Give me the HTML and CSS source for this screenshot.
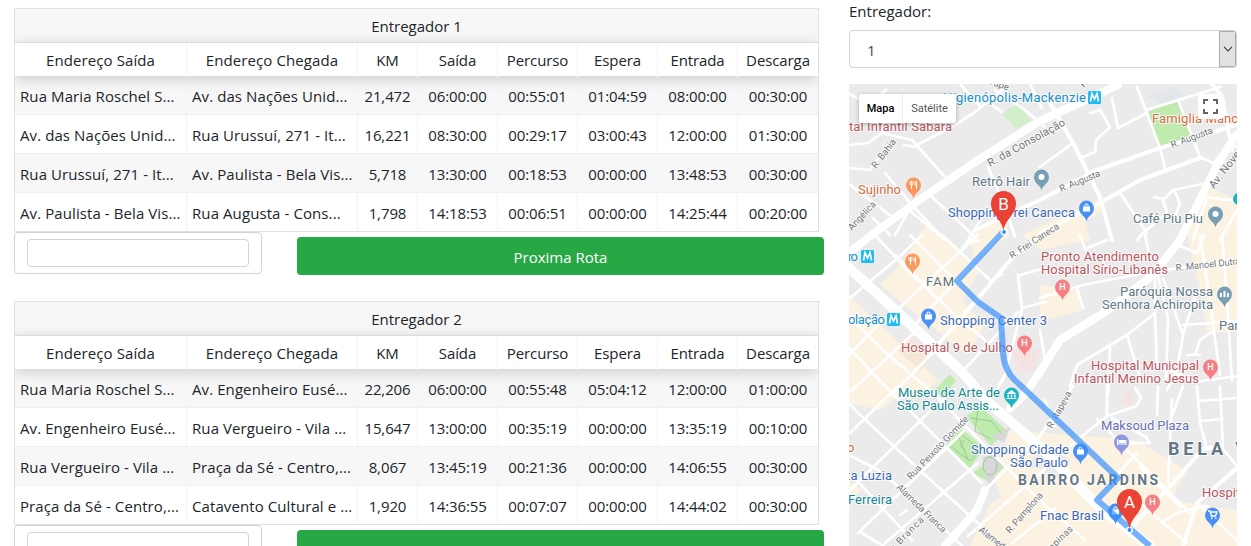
FILE: index.html
```
<!DOCTYPE html>
<html lang="pt-BR">
<head>
<meta charset="utf-8">
<title>Entregadores</title>
<link rel="stylesheet" href="styles.css">
</head>
<body>
<main class="page">
<div class="routes">
  <section class="route">
    <div class="grid">
      <div class="grid-title">Entregador 1</div>
      <div class="row head"><span>Endereço Saída</span><span>Endereço Chegada</span><span>KM</span><span>Saída</span><span>Percurso</span><span>Espera</span><span>Entrada</span><span>Descarga</span></div>
      <div class="row odd"><span class="addr">Rua Maria Roschel S...</span><span class="addr">Av. das Nações Unid...</span><span>21,472</span><span>06:00:00</span><span>00:55:01</span><span>01:04:59</span><span>08:00:00</span><span>00:30:00</span></div>
      <div class="row"><span class="addr">Av. das Nações Unid...</span><span class="addr">Rua Urussuí, 271 - It...</span><span>16,221</span><span>08:30:00</span><span>00:29:17</span><span>03:00:43</span><span>12:00:00</span><span>01:30:00</span></div>
      <div class="row odd"><span class="addr">Rua Urussuí, 271 - It...</span><span class="addr">Av. Paulista - Bela Vis...</span><span>5,718</span><span>13:30:00</span><span>00:18:53</span><span>00:00:00</span><span>13:48:53</span><span>00:30:00</span></div>
      <div class="row"><span class="addr">Av. Paulista - Bela Vis...</span><span class="addr">Rua Augusta - Cons...</span><span>1,798</span><span>14:18:53</span><span>00:06:51</span><span>00:00:00</span><span>14:25:44</span><span>00:20:00</span></div>
    </div>
    <div class="actions"><div class="field"><div class="field-inner"></div></div><button class="next">Proxima Rota</button></div>
  </section>
  <section class="route">
    <div class="grid">
      <div class="grid-title">Entregador 2</div>
      <div class="row head"><span>Endereço Saída</span><span>Endereço Chegada</span><span>KM</span><span>Saída</span><span>Percurso</span><span>Espera</span><span>Entrada</span><span>Descarga</span></div>
      <div class="row odd"><span class="addr">Rua Maria Roschel S...</span><span class="addr">Av. Engenheiro Eusé...</span><span>22,206</span><span>06:00:00</span><span>00:55:48</span><span>05:04:12</span><span>12:00:00</span><span>01:00:00</span></div>
      <div class="row"><span class="addr">Av. Engenheiro Eusé...</span><span class="addr">Rua Vergueiro - Vila ...</span><span>15,647</span><span>13:00:00</span><span>00:35:19</span><span>00:00:00</span><span>13:35:19</span><span>00:10:00</span></div>
      <div class="row odd"><span class="addr">Rua Vergueiro - Vila ...</span><span class="addr">Praça da Sé - Centro,...</span><span>8,067</span><span>13:45:19</span><span>00:21:36</span><span>00:00:00</span><span>14:06:55</span><span>00:30:00</span></div>
      <div class="row"><span class="addr">Praça da Sé - Centro,...</span><span class="addr">Catavento Cultural e ...</span><span>1,920</span><span>14:36:55</span><span>00:07:07</span><span>00:00:00</span><span>14:44:02</span><span>00:30:00</span></div>
    </div>
    <div class="actions"><div class="field"><div class="field-inner"></div></div><button class="next">Proxima Rota</button></div>
  </section>
</div>
<aside class="side">
  <div class="side-label">Entregador:</div>
  <div class="select"><span>1</span><div class="select-arrow"><svg width="10" height="6" viewBox="0 0 10 6"><path d="M1 .8 5 4.8 9 .8" fill="none" stroke="#444" stroke-width="1.2"/></svg></div></div>
  <div class="map">
  <svg class="map-canvas" width="388" height="462" viewBox="849 84 388 462">
    <defs>
      <path id="pin" d="M.5 10.500C-.5 4-7-.5 4-7-3a7.500 7.500 0 0 1 15 0C8 4 1.500 4 .5 10.500Z"/>
      <path id="drop" d="M.5 10.500C-.5 4.500-7 4-7-3a7.500 7.500 0 0 1 15 0C8 4 1.500 4.500.5 10.500Z"/>
      <path id="bag" fill="#fff" d="M-3-4.500h7v5h-7zM-1.500-4.500v-1a2 2 0 0 1 4 0v1h-1v-1a1 1 0 0 0-2 0v1z"/>
      <path id="fork" stroke="#fff" fill="none" d="M-3-7v2.500a1.500 1.500 0 0 0 3 0V-7M-1.500-7V1M3.500 1v-8C2-6 2-5 2-3h1.500"/>
      <g id="metro"><rect x="0" y="0" width="13" height="13" rx="1.500" fill="#1fbcf2"/><path d="M2.500 10.500 4 2.800 6.500 8 9 2.800l1.500 7.700" fill="none" stroke="#fff" stroke-width="1.700"/></g>
      <path id="big" d="M0 0C-1.500-12-12.500-16-12.500-27.500a12.500 12.500 0 0 1 25 0C12.500-16 1.500-12 0 0Z" fill="#ea4335"/>
    </defs>
    <rect x="849" y="84" width="388" height="462" fill="#ebebeb"/>
    <g class="built">
      <path d="M1022 235 1098 200 1104 210 1085 222 1090 240 1040 250Z"/>
      <path d="M928 222 980 270 962 300 985 325 968 355 880 285 905 260Z"/>
      <path d="M849 295 938 380 920 398 849 400Z"/>
      <path d="M968 235 1002 215 1010 235 975 260Z"/>
      <path d="M1040 285 1077 290 1083 310 1040 322Z"/>
      <path d="M1203 185 1237 200V332H1207L1202 300 1187 235Z"/>
      <path d="M1010 430 1135 440 1237 500V546H1020L995 480Z"/>
      <path d="M849 384 905 390 880 410 849 403ZM849 480 862 490 849 500ZM990 505 1020 485 1060 546H970Z"/>
    </g>
    <path d="M1200 452 1237 475V510L1170 500ZM1040 442 1070 460 1060 480 1030 465Z" fill="#ebebeb"/>
    <path d="M895 349 908 335 931 358 921 370Z" fill="#f6e6d7"/>
    <path d="M1010 350 1040 350 1035 370 1022 372ZM1125 392l9-4-2 16-12 2Z" fill="#f5e3e3"/>
    <path d="M1148 96 1175 86 1184 96 1161 104Z" fill="#e3e7e9"/>
    <g fill="#c0ebae">
      <path d="M1148 111 1179 100 1192 136 1160 147ZM935 390 950 374 956 381 942 397Z"/>
      <path d="M1002 113 1019 103 1030 121 1016 129Z" fill="#d2efc9"/>
      <path d="M966 416 981 407 1006 430 991 446ZM946 445 961 428 984 448 970 468ZM972 473 983 466 1000 460 1004 467 990 482Z"/>
    </g>
    <path d="M983 457 997 454 1001 467 990 484 983 474ZM991 437 1010 427 1004 442Z" fill="#d8d8d8"/>
    <g fill="none" stroke="#99cc94" stroke-width="1"><path d="M970 418 991 421 1002 434M978 409 975 431 991 439M949 445 961 434 980 450 970 461ZM957 432 968 460M965 441c-6 0-5 8 1 9"/><ellipse cx="990" cy="466" rx="7" ry="9"/></g>
    <g class="roads minor">
      <path d="M849 94 870 104 886 90M868 120 885 132M850 145 868 143 882 133 912 140 945 177M850 168 870 170 884 150M917 145 955 125 975 112 1005 88M978 95 1002 112M960 84 980 106M885 173 912 205 942 237M849 184 895 219M932 197 975 237M995 90 1025 110 1045 127M988 167 1005 207 1015 237M1030 84 1042 108"/>
      <path d="M904 145 917 147M940 130 928 100M962 250 983 216 1008 200M895 235 909 210 945 240M873 218 890 235"/>
      <path d="M1073 143 1040 167M1112 98 1118 128 1147 113M1137 87 1160 148 1165 168M1178 100 1200 157 1213 163 1230 147 1237 146M1147 110 1220 87M1120 193 1147 233M1207 183 1173 190 1163 200 1167 213 1143 233 1137 240M1174 190 1180 203 1173 223M1100 110 1110 127 1096 140 1095 152 1083 157M1090 113 1100 110M1206 197 1228 200 1237 199M1207 197 1193 240M1154 197 1164 199M1220 240 1237 210"/>
      <path d="M845 302 898 258 922 235M895 312 942 268 978 235M912 328 1003 231M962 372 1018 312M875 235 912 275 952 312 985 340M895 255 930 290M942 235 992 282M910 235 960 285M1018 275 1022 308 1045 302M1020 275 1045 268M1022 308 1012 348 1005 375 994 395M990 282 1002 274M972 242 978 240"/>
      <path d="M845 312 885 352 935 395 1012 473 1045 505 1085 540M849 348 885 386 982 483M849 355 885 318M850 392 915 332M892 395 940 345M858 413 948 496 992 536M849 455 878 470 915 500 962 546M850 473 912 540M849 403 858 413M850 433 898 386M850 490 925 416 955 389M858 533 965 430M885 543 978 463M985 490 1040 436M968 536 1045 469M1012 543 1055 509M860 532 875 541 884 546M900 515 907 510"/>
      <path d="M1040 436 1073 386M1070 446 1107 416 1137 406 1141 397 1135 388M1107 486 1137 453M1097 419 1120 443 1190 513M1120 486 1187 543M1140 467 1180 507M1107 386 1107 416M1172 399 1168 483M1183 386 1172 416M1197 386 1200 423 1207 449M1220 386 1223 449 1237 466M1198 401 1237 398M1200 421 1223 419M1158 386 1157 415M1120 443 1150 443 1146 437 1112 418M1165 520 1180 512 1207 506M1207 449 1223 449M1197 503 1237 540M1045 400 1055 426"/>
      <path d="M1040 298 1083 285 1150 272M1077 288 1083 308M1155 280 1155 315 1157 370M1155 313 1127 335 1077 365 1070 386M1157 272 1168 318 1166 380M1163 278 1183 335M1197 290 1183 335 1177 370 1167 390M1153 271 1207 265 1237 260M1200 235 1210 302 1220 375M1222 235 1227 300 1232 380M1110 348 1108 395M1127 335 1140 378M1183 325 1237 321M1178 245 1197 253 1204 235M1080 235 1085 249 1107 240M1150 258 1145 235M1195 355 1200 340 1212 332M1187 355 1200 355M1040 330 1045 360M1237 376 1195 382 1170 370"/>
    </g>
    <g class="roads medium">
      <path d="M975 230 1040 200 1097 170 1160 148 1237 125M1050 103 1073 143 1100 197 1112 240M1040 233 1100 203 1140 180 1200 158M935 348 992 282 1012 258 1045 232M1130 529 1173 483 1203 449 1220 446M1183 546 1197 503 1237 468M1212 84 1222 96 1232 150"/>
    </g>
    <g class="roads major">
      <path d="M849 253 870 236 925 196 978 160 1040 121 1073 106 1118 85M1237 134 1218 163 1180 240 1153 275 1105 312 1060 340 1040 372 1025 394 1010 408M985 490 977 510 945 546"/>
      <path class="avenue" d="M845 264 895 310 962 372 988 402 1045 451 1097 505 1150 546"/>
    </g>
    <g class="labels street">
      <text transform="translate(990 167) rotate(-29)" font-size="11" textLength="87">R. da Consolação</text>
      <text transform="translate(876 169) rotate(-53)" textLength="34">R. Bahia</text>
      <text transform="translate(852 231) rotate(-47)" textLength="36">Angélica</text>
      <text transform="translate(1061 192) rotate(-22)" textLength="43">R. Augusta</text>
      <text transform="translate(1172 148) rotate(-20)" textLength="44">R. Augusta</text>
      <text transform="translate(1012 259) rotate(-33)" textLength="57">R. Frei Caneca</text>
      <text transform="translate(1214 189) rotate(-52)" font-size="11" textLength="59">Av. Nove de</text>
      <text transform="translate(1176 271) rotate(-6)" textLength="65">R. Manoel Dutra</text>
      <text transform="translate(911 480) rotate(-46)" textLength="84">Rua Peixoto Gomide</text>
      <text transform="translate(896 488) rotate(44)" textLength="65">Alameda Franca</text>
      <text transform="translate(889 556) rotate(-45)" textLength="50">da Branca</text>
      <text transform="translate(1010 534) rotate(-49)" textLength="51">R. Pamplona</text>
      <text transform="translate(978 531) rotate(38)" textLength="52">Alameda Jaú</text>
      <text transform="translate(1052 429) rotate(-61)" textLength="41">R. Itapeva</text>
      <text transform="translate(1046 557) rotate(-45)" textLength="39">ampinas</text>
      <text transform="translate(988 84) rotate(18)">Tupe</text>
      <text transform="translate(1084 88) rotate(-50)">R.</text>
    </g>
    <g class="labels place">
      <text x="943" y="102" fill="#168fca" textLength="143">Higienópolis-Mackenzie</text>
      <text x="849" y="130.500" fill="#bb5661" textLength="103">tal Infantil Sabará</text>
      <text x="1152" y="122.500" fill="#d66d43" textLength="100">Famiglia Mancini</text>
      <text x="858" y="193.500" fill="#d66d43" textLength="43">Sujinho</text>
      <text x="972" y="185.500" fill="#607887" textLength="58">Retrô Hair</text>
      <text x="948" y="216.500" fill="#3b6ab5" textLength="127">Shopping Frei Caneca</text>
      <text x="1133" y="222.500" fill="#607887" textLength="70">Café Piu Piu</text>
      <text x="848" y="261" fill="#168fca" textLength="10">ro</text>
      <text x="1041" y="260.500" fill="#bb5661" textLength="118">Pronto Atendimento</text>
      <text x="1041" y="273.500" fill="#bb5661" textLength="127">Hospital Sírio-Libanês</text>
      <text x="926" y="286" fill="#5d6f7a" textLength="28">FAM</text>
      <text x="1120" y="296" fill="#607887" textLength="93">Paróquia Nossa</text>
      <text x="1102" y="308.500" fill="#607887" textLength="111">Senhora Achiropita</text>
      <text x="1219" y="329.500" fill="#607887">Para</text>
      <text x="848" y="324" fill="#168fca" textLength="37">olação</text>
      <text x="940" y="325" fill="#3b6ab5" textLength="107">Shopping Center 3</text>
      <text x="901" y="352" fill="#bb5661" textLength="112">Hospital 9 de Julho</text>
      <text x="1091" y="370" fill="#bb5661" textLength="108">Hospital Municipal</text>
      <text x="1074" y="383" fill="#bb5661" textLength="125">Infantil Menino Jesus</text>
      <text x="898" y="397" fill="#128993" textLength="102">Museu de Arte de</text>
      <text x="897" y="410" fill="#128993" textLength="102">São Paulo Assis...</text>
      <text x="1101" y="430" fill="#6972b4" textLength="88">Maksoud Plaza</text>
      <text x="971" y="454" fill="#3b6ab5" textLength="98">Shopping Cidade</text>
      <text x="1010" y="467" fill="#3b6ab5" textLength="58">São Paulo</text>
      <text x="847" y="452" fill="#d66d43">o</text>
      <text x="846" y="480" fill="#3b6ab5" textLength="46">ta Luzia</text>
      <text x="848" y="504" fill="#128993" textLength="44">Ferreira</text>
      <text x="1040" y="520" fill="#3b6ab5" textLength="64">Fnac Brasil</text>
      <text x="1202" y="497" fill="#bb5661">Hospital</text>
      <text class="area" x="1018" y="485" font-size="14" textLength="140">BAIRRO JARDINS</text>
      <text class="area" x="1168" y="455" font-size="18" textLength="88">BELA VI</text>
    </g>
    <use href="#metro" x="1088" y="91"/><use href="#metro" x="861" y="250"/><use href="#metro" x="887" y="313"/>
    <g transform="translate(913 188)"><use href="#drop" fill="#fb995a"/><use href="#fork"/></g>
    <g transform="translate(912 264)"><use href="#drop" fill="#fb995a"/><use href="#fork"/></g>
    <g fill="#77a0b4"><use href="#drop" x="1041" y="180"/><use href="#drop" x="1215" y="217"/><use href="#drop" x="1224" y="297"/></g>
    <g fill="#fff"><circle cx="1041.500" cy="177" r="3"/><circle cx="1215.500" cy="214" r="3"/><path d="M1220 293h2v4h-2zM1223.500 291h2v6h-2zM1227 293h2v4h-2z"/></g>
    <g transform="translate(1086 211)"><use href="#drop" fill="#4b91f4"/><use href="#bag"/></g>
    <g transform="translate(928 319)"><use href="#drop" fill="#4b91f4"/><use href="#bag"/></g>
    <g transform="translate(1080 454)"><use href="#drop" fill="#4b91f4"/><use href="#bag"/></g>
    <g transform="translate(1115 514)"><use href="#drop" fill="#4b91f4"/><use href="#bag"/></g>
    <g fill="#f77f83"><use href="#drop" x="1062" y="290"/><use href="#drop" x="1024" y="346"/><use href="#drop" x="1210" y="370"/><use href="#drop" x="1152" y="505"/></g>
    <g class="h"><text x="1062.500" y="290.200">H</text><text x="1024.500" y="346.200">H</text><text x="1210.500" y="370.200">H</text><text x="1152.500" y="505.200">H</text></g>
    <use href="#drop" x="1011" y="398" fill="#18b5c4"/><path d="M1006.500 394 1011.500 390 1016.500 394zM1007.500 394.500h1.500v3h-1.500zM1010.800 394.500h1.500v3h-1.500zM1014 394.500h1.500v3H1014zM1006.500 398h10v1h-10z" fill="#fff"/>
    <use href="#drop" x="1121" y="445" fill="#8f98df"/><path d="M1117.500 439v6M1117.500 444h8.500M1126 440v5" stroke="#fff"/><path d="M1118.500 440h7v3h-7z" fill="#fff"/>
    <use href="#drop" x="1212" y="518" fill="#4b91f4"/><path d="M1208 511h2l1.500 5h4l1.500-4h-6" fill="none" stroke="#fff" stroke-width="1.300"/><path d="M1211 517.500h1.500v1.500H1211zM1215 517.500h1.500v1.500H1215z" fill="#fff"/>
    <circle cx="1239" cy="199" r="6" fill="#18b5c4"/>
    <path d="M1003 232 957 281 978 302 1001 318 1003 352Q1004 372 1018 383L1118 478 1097 500 1150 546" fill="none" stroke="#338efc" stroke-opacity=".68" stroke-width="6" stroke-linejoin="round"/>
    <g fill="#338efc" stroke="#fff" stroke-width="1.500"><circle cx="1004" cy="232" r="2.700"/><circle cx="1129.500" cy="530" r="2.700"/></g>
    <use href="#big" x="1003.500" y="231"/><use href="#big" x="1129.500" y="529"/>
    <g class="marker"><text x="1003.500" y="210">B</text><text x="1129.500" y="508">A</text></g>
  </svg>
  <div class="map-type"><span class="on">Mapa</span><span>Satélite</span></div>
  <div class="fullscreen"><svg width="15" height="15" viewBox="0 0 15 15"><path d="M1 5V1h4M10 1h4v4M14 10v4h-4M5 14H1v-4" fill="none" stroke="#666" stroke-width="2"/></svg></div>
  </div>
</aside>
</main>
</body>
</html>
```
FILE: styles.css
```
* { box-sizing: border-box; }
body { margin: 0; background: #fff; color: #212529; font-family: "Open Sans", sans-serif; font-size: 15px; line-height: 24px; height: 546px; overflow: hidden; }
.page { display: flex; gap: 25px; padding-left: 14px; height: 546px; overflow: hidden; }
.routes { width: 810px; padding-top: 8px; flex: none; }
.route { height: 293px; }
.grid { width: 805px; height: 224px; border: 1px solid #dee0e2; overflow: hidden; }
.grid-title { height: 33px; background: #f7f7f7; text-align: center; line-height: 35px; }
.row { display: grid; grid-template-columns: 172px 171px 60px 80px 80px 80px 80px 80px; height: 39px; border-bottom: 1px solid #f0f0f0; line-height: 40px; text-align: center; white-space: nowrap; }
.row:last-child { border-bottom: 0; }
.row span { border-right: 1px solid #f3f3f3; letter-spacing: -.1px; }
.row span:last-child { border-right: 0; }
.row .addr { text-align: left; padding-left: 5px; letter-spacing: .09px; }
.odd { background: #f7f7f7; }
.head { position: relative; height: 34px; line-height: 35px; background: #fff; border-top: 1px solid #dcdcdc; border-bottom: 0; box-shadow: 0 3px 14px rgba(0,0,0,.18); }
.head span:nth-child(-n+2) { letter-spacing: .1px; }
.actions { display: flex; gap: 35px; }
.field { width: 248px; height: 42px; border: 1px solid #ced4da; border-radius: 4px; padding: 6px 12px; }
.field-inner { height: 28px; border: 1px solid #d3d3d3; border-radius: 4px; }
.next { width: 527px; height: 38px; margin-top: 5px; border: 0; border-radius: 4px; background: #28a745; color: #fff; font: inherit; padding: 2px 0 0; }
.side { width: 388px; flex: none; }
.side-label { height: 30px; line-height: 22px; }
.select { height: 38px; border: 1px solid #ced4da; border-radius: 4px; padding-left: 17px; display: flex; justify-content: space-between; align-items: stretch; line-height: 39px; color: #495057; overflow: hidden; }
.select-arrow { width: 17px; background: #e1e1e1; border: 1px solid #adadad; display: flex; align-items: center; justify-content: center; }
.map { position: relative; margin-top: 16px; height: 462px; overflow: hidden; }
.map-canvas { display: block; }
.built { fill: #fcf2e1; }
.roads { fill: none; stroke: #fff; stroke-linejoin: round; stroke-linecap: round; }
.minor { stroke-width: 2.7; }
.medium { stroke-width: 4; }
.major { stroke-width: 8; }
.avenue { stroke-width: 10; }
.labels { font-family: Roboto, sans-serif; paint-order: stroke; stroke: #fff; stroke-opacity: .8; stroke-width: 2px; stroke-linejoin: round; }
.street { font-size: 9.5px; fill: #717579; }
.place { font-size: 13px; }
.area { font-weight: 700; fill: #647786; }
.h { font: 500 9px Roboto, sans-serif; fill: #fff; text-anchor: middle; }
.marker { font: 17px Roboto, sans-serif; fill: #fff; text-anchor: middle; }
.map-type { position: absolute; left: 10px; top: 10px; height: 29px; display: flex; background: #fff; border-radius: 2px; box-shadow: 0 1px 4px rgba(0,0,0,.3); font: 11px/30px Roboto, sans-serif; color: #565656; }
.map-type span { width: 53px; text-align: center; }
.map-type .on { width: 44px; color: #000; font-weight: 500; border-right: 1px solid #eee; }
.fullscreen { position: absolute; right: 14px; top: 10px; width: 25px; height: 25px; background: #fff; display: flex; align-items: center; justify-content: center; border-radius: 2px; }
```
